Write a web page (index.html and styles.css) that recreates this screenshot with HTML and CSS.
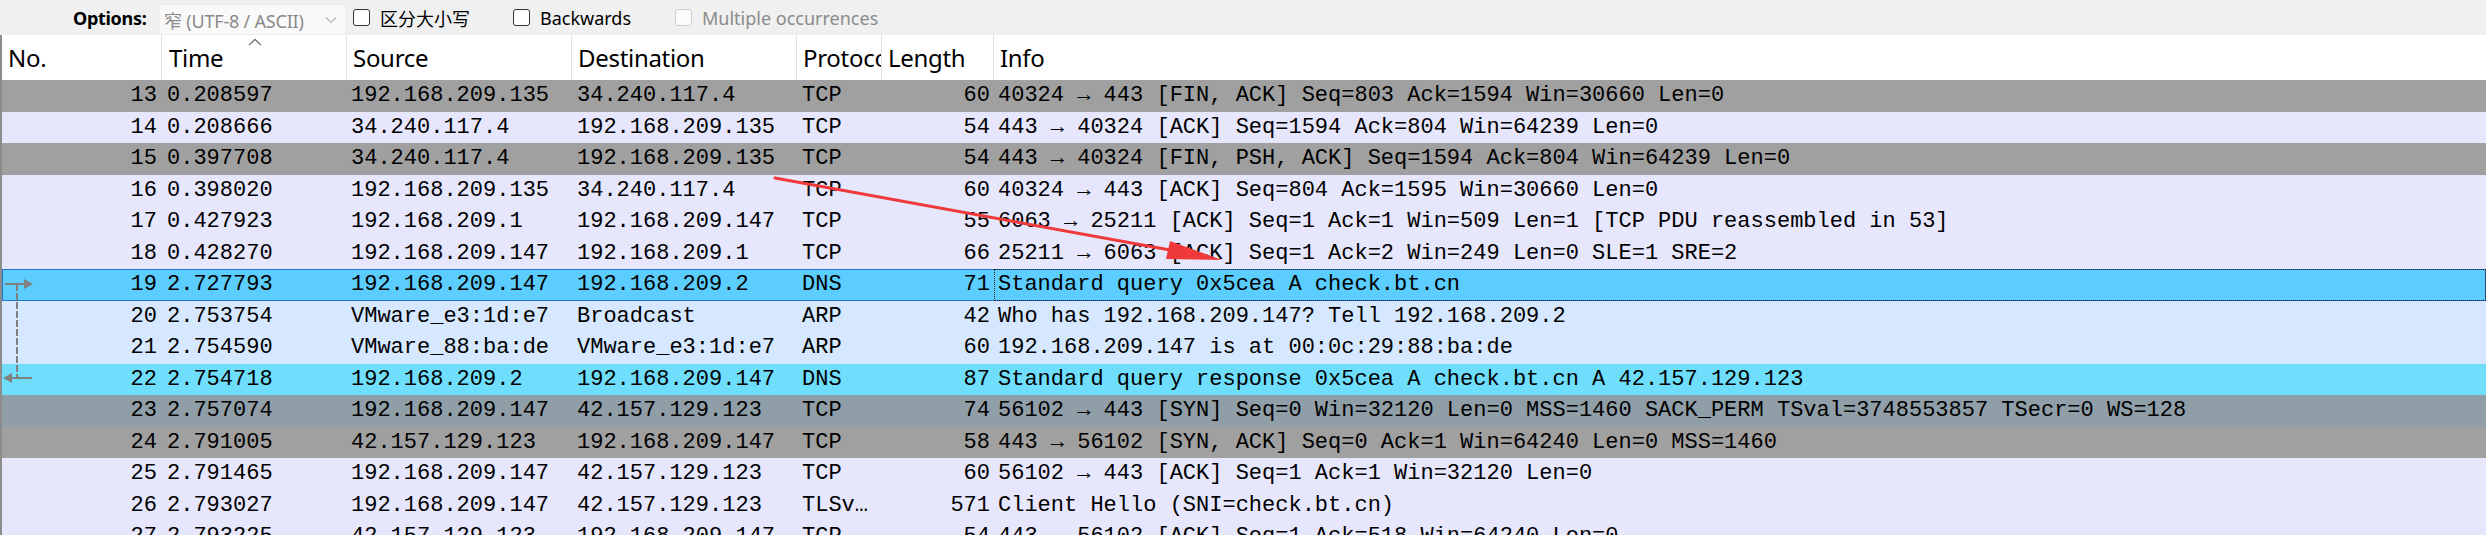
FILE: index.html
```html
<!DOCTYPE html>
<html>
<head>
<meta charset="utf-8">
<link rel="stylesheet" href="styles.css">
</head>
<body>
<div class="toolbar">
  <span class="opt-label">Options:</span>
  <div class="combo">
    <span class="combo-text">窄 (UTF-8 / ASCII)</span>
    <svg class="chev" width="12" height="8" viewBox="0 0 12 8"><polyline points="1,1.5 6,6.5 11,1.5" fill="none" stroke="#b8b8b8" stroke-width="1.2"/></svg>
  </div>
  <label class="check w1"><span class="box"></span>区分大小写</label>
  <label class="check w2"><span class="box"></span>Backwards</label>
  <label class="check disabled"><span class="box"></span>Multiple occurrences</label>
</div>

<div class="list">
  <div class="head">
    <div class="hc">No.</div>
    <div class="hc sorted">Time<svg class="sort" width="14" height="8" viewBox="0 0 14 8"><polyline points="1,7 7,1.5 13,7" fill="none" stroke="#777" stroke-width="1.3"/></svg></div>
    <div class="hc">Source</div>
    <div class="hc">Destination</div>
    <div class="hc">Protocol</div>
    <div class="hc">Length</div>
    <div class="hc last">Info</div>
  </div>

  <div class="row c-gray"><span class="no">13</span><span>0.208597</span><span>192.168.209.135</span><span>34.240.117.4</span><span>TCP</span><span class="len">60</span><span class="info">40324 → 443 [FIN, ACK] Seq=803 Ack=1594 Win=30660 Len=0</span></div>
  <div class="row c-tcp"><span class="no">14</span><span>0.208666</span><span>34.240.117.4</span><span>192.168.209.135</span><span>TCP</span><span class="len">54</span><span class="info">443 → 40324 [ACK] Seq=1594 Ack=804 Win=64239 Len=0</span></div>
  <div class="row c-gray"><span class="no">15</span><span>0.397708</span><span>34.240.117.4</span><span>192.168.209.135</span><span>TCP</span><span class="len">54</span><span class="info">443 → 40324 [FIN, PSH, ACK] Seq=1594 Ack=804 Win=64239 Len=0</span></div>
  <div class="row c-tcp"><span class="no">16</span><span>0.398020</span><span>192.168.209.135</span><span>34.240.117.4</span><span>TCP</span><span class="len">60</span><span class="info">40324 → 443 [ACK] Seq=804 Ack=1595 Win=30660 Len=0</span></div>
  <div class="row c-tcp"><span class="no">17</span><span>0.427923</span><span>192.168.209.1</span><span>192.168.209.147</span><span>TCP</span><span class="len">55</span><span class="info">6063 → 25211 [ACK] Seq=1 Ack=1 Win=509 Len=1 [TCP PDU reassembled in 53]</span></div>
  <div class="row c-tcp"><span class="no">18</span><span>0.428270</span><span>192.168.209.147</span><span>192.168.209.1</span><span>TCP</span><span class="len">66</span><span class="info">25211 → 6063 [ACK] Seq=1 Ack=2 Win=249 Len=0 SLE=1 SRE=2</span></div>
  <div class="row c-sel"><span class="no">19</span><span>2.727793</span><span>192.168.209.147</span><span>192.168.209.2</span><span>DNS</span><span class="len">71</span><span class="info focus">Standard query 0x5cea A check.bt.cn</span></div>
  <div class="row c-arp"><span class="no">20</span><span>2.753754</span><span>VMware_e3:1d:e7</span><span>Broadcast</span><span>ARP</span><span class="len">42</span><span class="info">Who has 192.168.209.147? Tell 192.168.209.2</span></div>
  <div class="row c-arp"><span class="no">21</span><span>2.754590</span><span>VMware_88:ba:de</span><span>VMware_e3:1d:e7</span><span>ARP</span><span class="len">60</span><span class="info">192.168.209.147 is at 00:0c:29:88:ba:de</span></div>
  <div class="row c-rel"><span class="no">22</span><span>2.754718</span><span>192.168.209.2</span><span>192.168.209.147</span><span>DNS</span><span class="len">87</span><span class="info">Standard query response 0x5cea A check.bt.cn A 42.157.129.123</span></div>
  <div class="row c-syn"><span class="no">23</span><span>2.757074</span><span>192.168.209.147</span><span>42.157.129.123</span><span>TCP</span><span class="len">74</span><span class="info">56102 → 443 [SYN] Seq=0 Win=32120 Len=0 MSS=1460 SACK_PERM TSval=3748553857 TSecr=0 WS=128</span></div>
  <div class="row c-gray"><span class="no">24</span><span>2.791005</span><span>42.157.129.123</span><span>192.168.209.147</span><span>TCP</span><span class="len">58</span><span class="info">443 → 56102 [SYN, ACK] Seq=0 Ack=1 Win=64240 Len=0 MSS=1460</span></div>
  <div class="row c-tcp"><span class="no">25</span><span>2.791465</span><span>192.168.209.147</span><span>42.157.129.123</span><span>TCP</span><span class="len">60</span><span class="info">56102 → 443 [ACK] Seq=1 Ack=1 Win=32120 Len=0</span></div>
  <div class="row c-tcp"><span class="no">26</span><span>2.793027</span><span>192.168.209.147</span><span>42.157.129.123</span><span>TLSv…</span><span class="len">571</span><span class="info">Client Hello (SNI=check.bt.cn)</span></div>
  <div class="row c-tcp"><span class="no">27</span><span>2.793225</span><span>42.157.129.123</span><span>192.168.209.147</span><span>TCP</span><span class="len">54</span><span class="info">443 → 56102 [ACK] Seq=1 Ack=518 Win=64240 Len=0</span></div>

  <svg class="related" width="40" height="130" viewBox="0 0 40 130">
    <g stroke="#808080" stroke-width="2" fill="none">
      <line x1="5" y1="15" x2="25" y2="15"/>
      <line x1="17" y1="15" x2="17" y2="109" stroke-dasharray="7 2"/>
      <line x1="11" y1="109" x2="32" y2="109"/>
    </g>
    <polygon points="24,10 33,15 24,20" fill="#808080"/>
    <polygon points="12,104 3,109 12,114" fill="#808080"/>
  </svg>
</div>

<svg class="annot" width="2486" height="535" viewBox="0 0 2486 535">
  <line x1="775" y1="178" x2="1170" y2="250" stroke="#f03a3a" stroke-width="3" stroke-linecap="round"/>
  <polygon points="1222,260 1166,259 1170,241" fill="#f03a3a"/>
</svg>
</body>
</html>
```
FILE: styles.css
```css
html, body {
  margin: 0;
  padding: 0;
  overflow: hidden;
  background: #ffffff;
}
body {
  position: relative;
  width: 2486px;
  height: 535px;
}

/* toolbar */
.toolbar {
  height: 35px;
  background: #f0f0f0;
  display: flex;
  align-items: center;
  padding-left: 73px;
  font-family: "Noto Sans", "Noto Sans CJK SC", sans-serif;
  font-size: 18px;
  color: #000;
}
.opt-label {
  width: 86px;
  font-weight: 700;
  letter-spacing: -0.3px;
}
.combo {
  box-sizing: border-box;
  width: 187px;
  height: 31px;
  margin-top: 4px;
  margin-right: 7px;
  background: #f9f9f9;
  border: 1px solid #ececec;
  display: flex;
  align-items: center;
  justify-content: space-between;
  padding: 0 8px 0 4px;
  color: #8a8a8a;
  font-size: 18px;
}
.combo-text {
  font-family: "Noto Sans", "Noto Sans CJK SC", sans-serif;
  letter-spacing: -0.2px;
}
.check {
  display: flex;
  align-items: center;
  white-space: nowrap;
  font-family: "Noto Sans", "Noto Sans CJK SC", sans-serif;
}
.check.w1 { width: 160px; }
.check.w2 { width: 162px; }
.box {
  box-sizing: border-box;
  width: 17px;
  height: 17px;
  border: 1px solid #333;
  border-radius: 3px;
  background: #fff;
  margin-right: 10px;
}
.check.disabled { color: #8b8b8b; }
.check.disabled .box { border-color: #cfcfcf; background: #fbfbfb; }

/* packet list */
.list {
  position: relative;
  border-left: 2px solid #8c8c8c;
}
.head, .row {
  display: grid;
  grid-template-columns: 160px 185px 225px 225px 85px 112px 1fr;
}
.head {
  height: 45px;
  background: #fff;
  font-family: "Noto Sans", sans-serif;
  font-size: 24px;
  color: #000;
}
.hc {
  box-sizing: border-box;
  border-right: 1px solid #e3e3e3;
  padding-left: 6px;
  line-height: 45px;
  white-space: nowrap;
  overflow: hidden;
  letter-spacing: -0.3px;
}
.hc:first-child { padding-left: 6px; }
.hc.last { border-right: none; }
.sorted { position: relative; padding-left: 7px; }
.sort {
  position: absolute;
  top: 3px;
  left: 86px;
}

.row {
  height: 31.5px;
  font-family: "Liberation Mono", "DejaVu Sans Mono", monospace;
  font-size: 22px;
  line-height: 31.5px;
  color: #000;
}
.row span {
  box-sizing: border-box;
  padding: 0 4px;
  white-space: nowrap;
  overflow: hidden;
}
.row .no { text-align: right; padding-right: 5px; }
.row .len { text-align: right; padding-right: 4px; }
.row span:nth-child(2) { padding-left: 5px; }
.row span:nth-child(4) { padding-left: 5px; }
.row span:nth-child(5) { padding-left: 5px; text-overflow: clip; }
.row .info { overflow: visible; padding-left: 4px; }

.c-gray { background: #a0a0a0; }
.c-tcp { background: #e6e6fd; }
.c-arp { background: #d6e8ff; }
.c-rel { background: #6fdefd; }
.c-syn { background: #909ea8; }
.c-sel {
  background: #5bcdfe;
  box-shadow: inset 0 0 0 1px #2576d2;
}
.row .focus {
  outline: 1px dotted #222;
  outline-offset: -1px;
}

.related {
  position: absolute;
  left: -2px;
  top: 234px;
}

.annot {
  position: absolute;
  left: 0;
  top: 0;
  pointer-events: none;
}
```
